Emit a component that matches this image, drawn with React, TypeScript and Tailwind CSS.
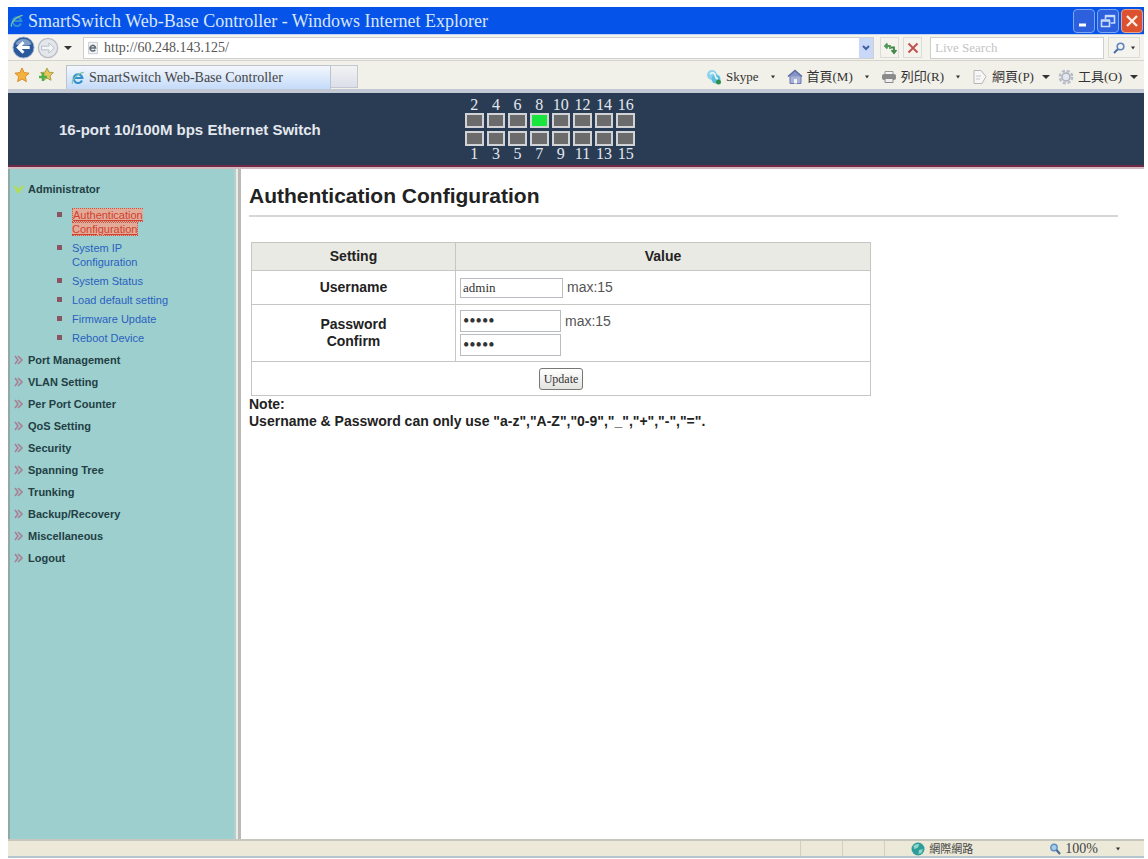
import { useState } from 'react';

const topPorts = [2, 4, 6, 8, 10, 12, 14, 16];
const bottomPorts = [1, 3, 5, 7, 9, 11, 13, 15];
const activePorts = [8];

const adminLinks = [
  'Authentication Configuration',
  'System IP Configuration',
  'System Status',
  'Load default setting',
  'Firmware Update',
  'Reboot Device',
];

const menuItems = [
  'Port Management',
  'VLAN Setting',
  'Per Port Counter',
  'QoS Setting',
  'Security',
  'Spanning Tree',
  'Trunking',
  'Backup/Recovery',
  'Miscellaneous',
  'Logout',
];

function IeIcon({ className }: { className?: string }) {
  return (
    <svg className={className} viewBox="0 0 16 16" fill="none" aria-hidden="true">
      <path d="M12.6 10.8A5 5 0 1 1 13 8H4" stroke="#2f8fd0" strokeWidth="2.4" />
      <path d="M2 14.5C0 12 5 3.500 14.500 1.500" stroke="#7cc4a0" strokeWidth="1.400" />
    </svg>
  );
}

function PageIcon() {
  return (
    <svg className="h-3.5 w-3.5 shrink-0" viewBox="0 0 16 16" aria-hidden="true">
      <path d="M3 1.500h10v13H3z" fill="#f4f4f4" stroke="#c4c8cc" />
      <path d="M10.500 10A3.200 3.200 0 1 1 11 8H5" fill="none" stroke="#5a6a74" strokeWidth="1.800" />
    </svg>
  );
}

function Caret({ className = 'text-[#333]' }: { className?: string }) {
  return (
    <svg className={`h-1 w-2 shrink-0 ${className}`} viewBox="0 0 8 4" aria-hidden="true">
      <path d="M0 0h8L4 4z" fill="currentColor" />
    </svg>
  );
}

function SmallCaret() {
  return (
    <svg className="h-1 w-1 shrink-0" viewBox="0 0 4 4" aria-hidden="true">
      <path d="M0 .5h4L2 3.500z" fill="#333" />
    </svg>
  );
}

function TitleBar() {
  return (
    <div className="flex h-[27px] items-center bg-[#0553e8] pl-0.5 pr-px">
      <IeIcon className="h-3.5 w-3.5 shrink-0" />
      <h1 className="min-w-0 flex-1 truncate pl-1 font-['Liberation_Serif',serif] text-[18px] leading-6 text-[#d9e6fb]">
        SmartSwitch Web-Base Controller - Windows Internet Explorer
      </h1>
      <div className="flex gap-0.5">
        <button type="button" aria-label="Minimize" className="flex h-6 w-[22px] items-center justify-center rounded-sm border border-[#7ea6f2] bg-[#2c60dc]">
          <svg className="h-4 w-4" viewBox="0 0 16 16" aria-hidden="true">
            <path d="M3 12h7" stroke="#fff" strokeWidth="3" />
          </svg>
        </button>
        <button type="button" aria-label="Restore" className="flex h-6 w-[22px] items-center justify-center rounded-sm border border-[#7ea6f2] bg-[#2c60dc]">
          <svg className="h-4 w-4" viewBox="0 0 16 16" fill="none" aria-hidden="true">
            <path d="M5.500 6V3h9v7h-4" stroke="#c8dafc" strokeWidth="1.600" />
            <path d="M5 3h10" stroke="#c8dafc" strokeWidth="2.400" />
            <path d="M1.500 7.500h8v6h-8z" stroke="#c8dafc" strokeWidth="1.600" />
            <path d="M1 7.500h9" stroke="#c8dafc" strokeWidth="2.400" />
          </svg>
        </button>
        <button type="button" aria-label="Close" className="flex h-6 w-[22px] items-center justify-center rounded-sm border border-[#e8a58c] bg-[#dc5230]">
          <svg className="h-4 w-4" viewBox="0 0 16 16" aria-hidden="true">
            <path d="M3 3l10 10M13 3L3 13" stroke="#fdeee6" strokeWidth="2.400" />
          </svg>
        </button>
      </div>
    </div>
  );
}

function AddressRow() {
  return (
    <div className="flex h-[26px] items-center border-t border-[#c3d4ee] bg-[#f4f3ee] pl-1 pr-1">
      <button type="button" aria-label="Back">
        <svg className="h-[23px] w-[23px]" viewBox="0 0 24 24" aria-hidden="true">
          <circle cx="12" cy="12" r="11" fill="#2a5a9c" stroke="#9fb4cf" />
          <path d="M3.500 8.500a9.500 9.500 0 0 1 17 0Q12 12 3.500 8.500z" fill="#7f9fc8" />
          <path d="M18.500 12H7M12 6.500L6.500 12l5.500 5.500" stroke="#fff" strokeWidth="3" fill="none" />
        </svg>
      </button>
      <button type="button" aria-label="Forward" className="ml-0.5">
        <svg className="h-[22px] w-[22px]" viewBox="0 0 24 24" aria-hidden="true">
          <circle cx="12" cy="12" r="10.500" fill="#e3e6ea" stroke="#b9bec6" strokeWidth="1.500" />
          <path d="M5 10h8V6.500l6 5.500-6 5.500V14H5z" fill="#f4f5f7" stroke="#b6bcc6" />
        </svg>
      </button>
      <button type="button" aria-label="Recent pages" className="ml-1 px-px">
        <Caret />
      </button>
      <label className="ml-2.5 flex h-[22px] min-w-0 flex-1 items-center border border-[#cfcfcb] bg-white pl-0.5">
        <PageIcon />
        <input
          aria-label="Address"
          defaultValue="http://60.248.143.125/"
          className="min-w-0 flex-1 bg-transparent pl-1 font-['Liberation_Serif',serif] text-[14px] leading-5 text-[#555] outline-none"
        />
        <button type="button" aria-label="Show address history" className="flex h-5 w-3.5 items-center justify-center bg-[#c9d8f8]">
          <svg className="h-2 w-2" viewBox="0 0 8 8" aria-hidden="true">
            <path d="M1 2l3 3 3-3" stroke="#3f5f9c" strokeWidth="2" fill="none" />
          </svg>
        </button>
      </label>
      <button type="button" aria-label="Refresh" className="ml-1.5 flex h-[21px] w-[19px] items-center justify-center border border-[#dcdcd6]">
        <svg className="h-3.5 w-3.5" viewBox="0 0 14 14" fill="none" aria-hidden="true">
          <path d="M7 8V5H2.500M4.500 2.500L2 5l2.500 2.500" stroke="#4f9a58" strokeWidth="1.800" />
          <path d="M8 6.500h3v5M8.500 9l2.500 3 2.500-3" stroke="#3d8747" strokeWidth="1.800" />
        </svg>
      </button>
      <button type="button" aria-label="Stop" className="ml-1 flex h-[21px] w-[19px] items-center justify-center border border-[#dcdcd6]">
        <svg className="h-3 w-3" viewBox="0 0 12 12" aria-hidden="true">
          <path d="M1.500 1.500l9 9M10.500 1.500l-9 9" stroke="#c0524f" strokeWidth="2" />
        </svg>
      </button>
      <input
        aria-label="Search"
        placeholder="Live Search"
        className="ml-2 h-[22px] w-[174px] border border-[#cfcfcb] bg-white px-1 font-['Liberation_Serif',serif] text-[13px] text-[#666] outline-none placeholder:text-[#c4c4c4]"
      />
      <div className="ml-1 flex h-[21px] items-center gap-1.5 border border-[#dcdcd6] px-1">
        <button type="button" aria-label="Start search">
          <svg className="h-3 w-3" viewBox="0 0 12 12" fill="none" aria-hidden="true">
            <circle cx="7.500" cy="4.500" r="3.300" stroke="#5b84c0" strokeWidth="1.600" />
            <path d="M5 7L1 11" stroke="#4a6ca6" strokeWidth="2" />
          </svg>
        </button>
        <button type="button" aria-label="Search options" className="flex items-center">
          <SmallCaret />
        </button>
      </div>
    </div>
  );
}

function TabRow() {
  const command = 'flex items-center gap-1 whitespace-nowrap';

  return (
    <div className="flex h-[33px] items-start border-b-4 border-b-[#c2c9d4] border-t border-t-[#d4d3cd] bg-[#f1f0e9] pl-1.5 pr-1.5">
      <div className="flex h-7 items-center gap-2">
        <button type="button" aria-label="Favorites">
          <svg className="h-4 w-4" viewBox="0 0 16 16" aria-hidden="true">
            <path d="M8 1l2.100 4.600 5 .6-3.700 3.400 1 5L8 12.100l-4.400 2.500 1-5L.9 6.200l5-.6z" fill="#f4b13c" stroke="#d98f2e" />
          </svg>
        </button>
        <button type="button" aria-label="Add to favorites">
          <svg className="h-4 w-4" viewBox="0 0 16 16" aria-hidden="true">
            <path d="M9 1l1.900 4.100 4.500.6-3.300 3.100.9 4.500L9 11.100l-4 2.200.9-4.500-3.300-3.100 4.500-.6z" fill="#e8c558" stroke="#a9a348" />
            <path d="M5 6v8M1 10h8" stroke="#4fae45" strokeWidth="2.600" />
          </svg>
        </button>
      </div>
      <div className="ml-3 mt-1 flex h-6 w-[265px] shrink-0 items-center gap-1 border border-b-0 border-[#bcc3cd] bg-linear-to-b from-[#f3f7fc] to-[#c5dbfa] pl-1">
        <IeIcon className="h-3.5 w-3.5 shrink-0" />
        <span className="whitespace-nowrap font-['Liberation_Serif',serif] text-[14px] leading-5 text-[#444]">
          SmartSwitch Web-Base Controller
        </span>
      </div>
      <button type="button" aria-label="New tab" className="mt-1 h-[23px] w-[27px] shrink-0 border border-l-0 border-[#c5c8d0] bg-linear-to-b from-[#f3f3f3] to-[#dcdfeb]" />
      <div className="ml-auto flex h-8 items-center gap-3 font-['Liberation_Serif','Noto_Sans_CJK_TC',serif] text-[13px] text-[#333]">
        <button type="button" className={command}>
          <svg className="h-4 w-4" viewBox="0 0 16 16" aria-hidden="true">
            <circle cx="6" cy="6" r="5" fill="#8dd3ec" />
            <circle cx="10" cy="10" r="4.500" fill="#5fbfe0" />
            <path d="M4 5q4-3 5 1t3 4" stroke="#e9f8fd" strokeWidth="1.600" fill="none" />
            <circle cx="12.500" cy="13" r="2.500" fill="#2f8f4f" />
          </svg>
          Skype
        </button>
        <SmallCaret />
        <button type="button" className={command}>
          <svg className="h-4 w-4" viewBox="0 0 16 16" aria-hidden="true">
            <path d="M3 7v7.500h11V7" fill="#a9b3d8" stroke="#6b79ae" />
            <path d="M1 7.500L8 1.500l7 6" fill="#8795c6" stroke="#5c6aa2" strokeWidth="1.400" />
            <path d="M7 10h3v4.500H7z" fill="#f2f4fb" />
          </svg>
          首頁(M)
        </button>
        <SmallCaret />
        <button type="button" className={command}>
          <svg className="h-4 w-4" viewBox="0 0 16 16" aria-hidden="true">
            <path d="M4 2.500h8v3H4z" fill="#f4f4f4" stroke="#999" />
            <rect x="1" y="5" width="14" height="6" rx="2" fill="#8b8b8b" />
            <path d="M4 9.500h8v4H4z" fill="#eee" stroke="#888" />
          </svg>
          列印(R)
        </button>
        <SmallCaret />
        <button type="button" className={command}>
          <svg className="h-4 w-4" viewBox="0 0 16 16" fill="none" aria-hidden="true">
            <path d="M2 1.500h7l5 6-4 7H2z" fill="#f6f6f6" stroke="#b7b7b7" />
            <path d="M4 7h5M4 10h4" stroke="#c4c4c4" />
          </svg>
          網頁(P)
          <Caret className="ml-1 text-[#333]" />
        </button>
        <button type="button" className={`${command} -ml-1`}>
          <svg className="h-4 w-4" viewBox="0 0 16 16" fill="none" aria-hidden="true">
            <circle cx="8" cy="8" r="6.200" stroke="#b8bcc8" strokeWidth="2.400" strokeDasharray="3 1.870" />
            <circle cx="8" cy="8" r="4" fill="#e4e6ee" stroke="#a9aebd" strokeWidth="1.500" />
          </svg>
          工具(O)
          <Caret className="ml-1 text-[#333]" />
        </button>
      </div>
    </div>
  );
}

function Port({ port }: { port: number }) {
  const color = activePorts.includes(port) ? 'bg-[#19e63c]' : 'bg-[#6b6b6b]';
  return <div title={`Port ${port}`} className={`h-[15px] border-2 border-[#d2d3d6] ${color}`} />;
}

function DeviceHeader() {
  return (
    <header className="flex h-[74px] border-b-2 border-[#702a45] bg-[#293c54] pl-[51px]">
      <div className="flex w-[406px] shrink-0 items-center pt-0.5 font-['Liberation_Sans',sans-serif] text-[15px] font-bold text-[#e4e8ee]">
        16-port 10/100M bps Ethernet Switch
      </div>
      <div className="grid w-[170px] shrink-0 grid-cols-8 content-start gap-x-[3px] pt-1 text-center font-['Liberation_Serif',serif] text-[16px] leading-4 text-[#e4e8ee]">
        {topPorts.map((port) => (
          <span key={port}>{port}</span>
        ))}
        {topPorts.map((port) => (
          <Port key={port} port={port} />
        ))}
        <div className="col-span-8 h-[3px]" />
        {bottomPorts.map((port) => (
          <Port key={port} port={port} />
        ))}
        {bottomPorts.map((port) => (
          <span key={port}>{port}</span>
        ))}
      </div>
    </header>
  );
}

function Sidebar() {
  const [current, setCurrent] = useState(adminLinks[0]);

  return (
    <nav className="w-[226px] shrink-0 border-l-2 border-[#8fa9a8] bg-[#9dcfce] pt-[9px] font-['Liberation_Sans',sans-serif] text-[11px]">
      <a href="#administrator" className="flex h-[22px] items-center gap-1 pl-1 font-bold text-[#234044]">
        <svg className="h-2.5 w-2.5" viewBox="0 0 10 10" fill="none" aria-hidden="true">
          <path d="M1 2l3 6 5-6" stroke="#b5dc4a" strokeWidth="2.200" />
        </svg>
        Administrator
      </a>
      <ul className="mb-1 mt-2 flex flex-col gap-[5px] pl-[46px] leading-[14px]">
        {adminLinks.map((item) => (
          <li key={item} className="flex items-start gap-2.5">
            <span className="ml-px mt-1 h-[5px] w-[5px] shrink-0 bg-[#8a5560]" />
            <a
              href={`#${item.toLowerCase().replaceAll(' ', '-')}`}
              onClick={() => setCurrent(item)}
              className={item.endsWith('Configuration') ? 'w-[90px]' : ''}
            >
              <span className={item === current ? 'border border-dotted border-[#c0584c] bg-[#e2ab98] text-[#d2402f] underline' : 'text-[#2a5fc0]'}>
                {item}
              </span>
            </a>
          </li>
        ))}
      </ul>
      {menuItems.map((item) => (
        <a
          key={item}
          href={`#${item.toLowerCase().replaceAll(' ', '-')}`}
          className="flex h-[22px] items-center gap-1 pl-1 font-bold text-[#234044]"
        >
          <svg className="h-2.5 w-2.5" viewBox="0 0 10 10" fill="none" aria-hidden="true">
            <path d="M1 1l3 4-3 4M4 1l4 4-4 4" stroke="#a97f94" strokeWidth="1.600" />
          </svg>
          {item}
        </a>
      ))}
    </nav>
  );
}

function AuthForm() {
  const cell = 'border border-[#c6c7c3]';
  const field = "border border-[#b9bcc0] bg-white px-0.5 font-['Liberation_Serif',serif] text-[#333] outline-none";

  return (
    <form onSubmit={(e) => e.preventDefault()}>
      <table className="ml-0.5 w-[620px] border-collapse text-[14px]">
        <thead>
          <tr className="h-7 bg-[#e9eae4]">
            <th className={`${cell} w-[204px]`}>Setting</th>
            <th className={cell}>Value</th>
          </tr>
        </thead>
        <tbody>
          <tr className="h-[34px]">
            <th className={cell}>
              <label htmlFor="username">Username</label>
            </th>
            <td className={`${cell} px-1`}>
              <div className="flex items-center gap-1 text-[#555]">
                <input id="username" defaultValue="admin" maxLength={15} className={`${field} h-5 w-[103px] text-[13px]`} />
                max:15
              </div>
            </td>
          </tr>
          <tr className="h-[57px]">
            <th className={`${cell} leading-[17px]`}>
              <label htmlFor="password" className="block">Password</label>
              <label htmlFor="confirm" className="block">Confirm</label>
            </th>
            <td className={`${cell} px-1`}>
              <div className="flex items-center gap-1 text-[#555]">
                <input id="password" type="password" defaultValue="admin" maxLength={15} className={`${field} h-[22px] w-[101px] text-[18px]`} />
                max:15
              </div>
              <input id="confirm" type="password" defaultValue="admin" maxLength={15} className={`${field} mt-0.5 block h-[22px] w-[101px] text-[18px]`} />
            </td>
          </tr>
          <tr className="h-[34px]">
            <td colSpan={2} className={`${cell} text-center`}>
              <button
                type="submit"
                className="h-[22px] rounded-[3px] border border-[#777] bg-linear-to-b from-white to-[#e2e2de] px-1 align-middle font-['Liberation_Serif',serif] text-[12px] leading-4 text-[#333]"
              >
                Update
              </button>
            </td>
          </tr>
        </tbody>
      </table>
    </form>
  );
}

function StatusBar() {
  return (
    <footer className="flex h-[19px] items-center border-b-2 border-t-2 border-b-[#b4c6d0] border-t-[#c6c7bd] bg-[#ece9d8] pr-6 font-['Liberation_Serif','Noto_Sans_CJK_TC',serif] text-[11px] leading-4 text-[#444]">
      <div className="ml-auto flex h-full">
        <span className="w-[42px] border-l border-[#d3d0c2]" />
        <span className="w-[42px] border-l border-[#d3d0c2]" />
        <span className="w-[27px] border-l border-[#d3d0c2]" />
      </div>
      <svg className="h-3.5 w-3.5" viewBox="0 0 14 14" aria-hidden="true">
        <circle cx="7" cy="7" r="6.500" fill="#2f9c9c" />
        <path d="M2.500 4q3-3 6-1.500L6.500 6 3 7zM8 8l4-1-1.500 4-3 1z" fill="#8fd6c4" />
      </svg>
      <span className="ml-1 w-[120px]">網際網路</span>
      <button type="button" className="flex items-center gap-1 text-[14px] leading-4">
        <svg className="h-3 w-3" viewBox="0 0 12 12" fill="none" aria-hidden="true">
          <circle cx="5" cy="4.500" r="3.200" fill="#a8cdea" stroke="#5b8fc0" strokeWidth="1.400" />
          <path d="M7.500 7l3.500 4" stroke="#47688f" strokeWidth="2" />
        </svg>
        100%
        <span className="ml-3.5">
          <SmallCaret />
        </span>
      </button>
    </footer>
  );
}

export default function App() {
  return (
    <div className="flex min-h-screen flex-col bg-white pb-px pl-2 pr-1 pt-[7px]">
      <TitleBar />
      <AddressRow />
      <TabRow />
      <DeviceHeader />
      <div className="flex flex-1 border-t-2 border-[#d3b9bd]">
        <Sidebar />
        <div className="w-[7px] shrink-0 border-l-2 border-r-[3px] border-l-[#b5cfcd] border-r-[#b9b9b5] bg-[#ecebe6]" />
        <main className="min-w-0 flex-1 pl-2 pr-[26px] pt-[13px] font-['Liberation_Sans',sans-serif] text-[#222]">
          <h2 className="border-b-2 border-[#d6d6d2] pb-[5px] text-[21px] font-bold leading-7">
            Authentication Configuration
          </h2>
          <div className="pt-[25px]">
            <AuthForm />
          </div>
          <p className="text-[14px] font-bold leading-[17px]">
            Note:
            <br />
            Username &amp; Password can only use "a-z","A-Z","0-9","_","+","-","=".
          </p>
        </main>
      </div>
      <StatusBar />
    </div>
  );
}
